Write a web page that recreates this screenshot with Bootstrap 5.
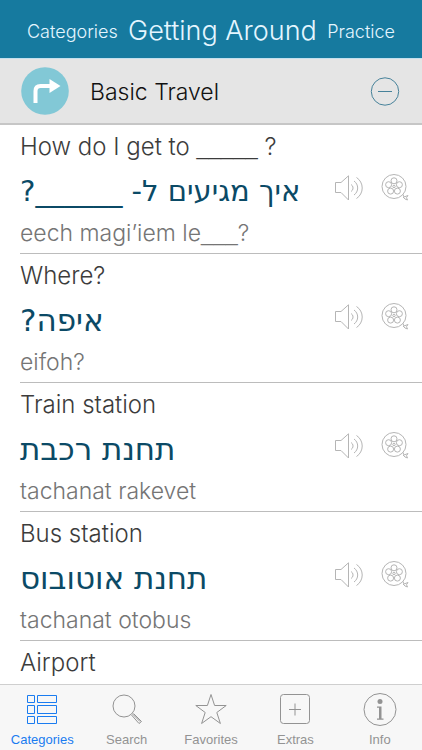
<!DOCTYPE html>
<html lang="en">
<head>
<meta charset="utf-8">
<meta name="viewport" content="width=device-width, initial-scale=1">
<title>Getting Around</title>
<link href="https://cdn.jsdelivr.net/npm/bootstrap@5.3.0/dist/css/bootstrap.min.css" rel="stylesheet">
<style>
body { font-family: Inter, "Liberation Sans", sans-serif; font-weight: 300; color: #3c3c3c; }
.topbar { background: #167a9f; height: 59px; padding: 4px 27px 0; border-bottom: 1px solid #c3e0ee; }
.topbar a, .topbar h1 { color: #e4f6ff; font-weight: 300; white-space: nowrap; }
.topbar a { font-size: 18px; }
.topbar h1 { font-size: 27px; line-height: 36px; }
.section-head { background: #e5e5e5; height: 66px; padding: 0 22px 0 21px; border-bottom: 2px solid #c6c6c6; }
.section-head h2 { font-size: 23px; font-weight: 300; color: #111; margin-left: 21px; padding-top: 3px; }
.phrases { scrollbar-width: none; }
.phrases::-webkit-scrollbar { display: none; }
.phrase { margin-left: 20px; border-bottom: 1px solid #bcbcbc; }
.english, .translit { white-space: nowrap; }
.english { font-size: 24px; line-height: 44px; }
.blank { font-family: "Liberation Sans", sans-serif; font-size: 22px; line-height: 1; }
.hebrew { font-family: "DejaVu Sans", sans-serif; font-size: 31px; font-weight: 400; line-height: 44px; color: #0b4a66; white-space: nowrap; }
.hebrew.long { font-size: 29px; }
.translit { font-size: 23px; line-height: 40px; color: #757575; }
.tools { gap: 18px; padding: 5px 13px 0 0; }
.bare { background: none; color: #b5b5b5; }
.tabs { background: #f7f7f7; height: 66px; border-top: 1px solid #cfcfcf; }
.tabs a { font-family: "Liberation Sans", sans-serif; font-weight: 400; font-size: 13px; line-height: 16px; color: #939393; padding-top: 7px; }
.tabs a.active { color: #1a7cf0; }
.tabs svg { margin-bottom: 6px; }
svg { display: block; fill: none; stroke: currentColor; }
</style>
<script src="https://cdn.jsdelivr.net/npm/bootstrap@5.3.0/dist/js/bootstrap.bundle.min.js"></script>
</head>
<body class="d-flex flex-column vh-100 overflow-hidden bg-white">

<svg class="d-none" aria-hidden="true">
  <symbol id="speaker" viewBox="0 0 30 26">
    <path d="M2.500 7.500H8L15.500 0.800V25L8 17.500H2.500Z"/>
    <path d="M18 9.500a4 4 0 0 1 0 7M21 6a8.500 8.500 0 0 1 0 14M23.500 2.500a12.500 12.500 0 0 1 0 21"/>
  </symbol>
  <symbol id="reel" viewBox="0 0 28 28">
    <circle cx="13" cy="12.500" r="12"/>
    <circle cx="13" cy="6.800" r="3"/><circle cx="18.400" cy="10.700" r="3"/><circle cx="16.400" cy="17.100" r="3"/><circle cx="9.600" cy="17.100" r="3"/><circle cx="7.600" cy="10.700" r="3"/>
    <circle cx="13" cy="12.500" r="1.200"/>
    <path d="M22 20.500l1 2.500 4-1.500-1.500 2.200 1 2.300-2.500-1-2-2"/>
  </symbol>
</svg>

<header class="topbar d-flex align-items-center justify-content-between flex-shrink-0">
  <a class="text-decoration-none" href="#categories">Categories</a>
  <h1 class="m-0">Getting Around</h1>
  <a class="text-decoration-none" href="#practice">Practice</a>
</header>

<section class="section-head d-flex align-items-center flex-shrink-0">
  <svg width="48" height="48" viewBox="0 0 48 48" aria-hidden="true">
    <circle cx="24" cy="24" r="23.800" fill="#82c8d6" stroke="none"/>
    <path d="M14.500 36V24q0-5 5-5H29" stroke="#fff" stroke-width="4"/>
    <path d="M28.500 12L39.500 19L28.500 26Z" fill="#fff" stroke="none"/>
  </svg>
  <h2 class="mb-0 me-auto">Basic Travel</h2>
  <button class="bare border-0 p-0" type="button" aria-label="Collapse Basic Travel">
    <svg width="30" height="30" viewBox="0 0 30 30"><circle cx="15" cy="15.500" r="13.700" stroke="#47829a"/><path d="M8 15.500H22" stroke="#47829a"/></svg>
  </button>
</section>

<main class="phrases flex-grow-1 overflow-auto">
  <article class="phrase">
    <div class="english">How do I get to <span class="blank">_____</span> ?</div>
    <div class="d-flex align-items-start justify-content-between">
      <div class="hebrew long" lang="he" dir="rtl">איך מגיעים ל- ______?</div>
      <div class="tools d-flex">
        <button class="bare border-0 p-0" type="button" aria-label="Listen"><svg width="30" height="26"><use href="#speaker"/></svg></button>
        <button class="bare border-0 p-0" type="button" aria-label="Watch"><svg width="28" height="28"><use href="#reel"/></svg></button>
      </div>
    </div>
    <div class="translit">eech magi’iem le<span class="blank">___</span>?</div>
  </article>
  <article class="phrase">
    <div class="english">Where?</div>
    <div class="d-flex align-items-start justify-content-between">
      <div class="hebrew" lang="he" dir="rtl">איפה?</div>
      <div class="tools d-flex">
        <button class="bare border-0 p-0" type="button" aria-label="Listen"><svg width="30" height="26"><use href="#speaker"/></svg></button>
        <button class="bare border-0 p-0" type="button" aria-label="Watch"><svg width="28" height="28"><use href="#reel"/></svg></button>
      </div>
    </div>
    <div class="translit">eifoh?</div>
  </article>
  <article class="phrase">
    <div class="english">Train station</div>
    <div class="d-flex align-items-start justify-content-between">
      <div class="hebrew" lang="he" dir="rtl">תחנת רכבת</div>
      <div class="tools d-flex">
        <button class="bare border-0 p-0" type="button" aria-label="Listen"><svg width="30" height="26"><use href="#speaker"/></svg></button>
        <button class="bare border-0 p-0" type="button" aria-label="Watch"><svg width="28" height="28"><use href="#reel"/></svg></button>
      </div>
    </div>
    <div class="translit">tachanat rakevet</div>
  </article>
  <article class="phrase">
    <div class="english">Bus station</div>
    <div class="d-flex align-items-start justify-content-between">
      <div class="hebrew" lang="he" dir="rtl">תחנת אוטובוס</div>
      <div class="tools d-flex">
        <button class="bare border-0 p-0" type="button" aria-label="Listen"><svg width="30" height="26"><use href="#speaker"/></svg></button>
        <button class="bare border-0 p-0" type="button" aria-label="Watch"><svg width="28" height="28"><use href="#reel"/></svg></button>
      </div>
    </div>
    <div class="translit">tachanat otobus</div>
  </article>
  <article class="phrase border-0">
    <div class="english">Airport</div>
  </article>
</main>

<nav class="tabs nav nav-fill flex-nowrap flex-shrink-0">
  <a class="active col d-flex flex-column align-items-center text-decoration-none" href="#categories" aria-current="page">
    <svg width="34" height="34" viewBox="0 0 34 34"><path d="M2.500 3.500h7v7h-7zM12.500 3.500h19v7h-19zM2.500 13.500h7v8h-7zM12.500 13.500h19v8h-19zM2.500 24.500h7v7h-7zM12.500 24.500h19v7h-19z"/></svg>
    Categories
  </a>
  <a class="col d-flex flex-column align-items-center text-decoration-none" href="#search">
    <svg width="34" height="34" viewBox="0 0 34 34"><circle cx="14" cy="14" r="11"/><path d="M21.500 23L29 31.500l2.500-2L23.500 21.500M22 21.500l8 8"/></svg>
    Search
  </a>
  <a class="col d-flex flex-column align-items-center text-decoration-none" href="#favorites">
    <svg width="34" height="34" viewBox="0 0 34 34"><path d="M17 2.500L20.600 13.500H32.200L22.800 20.500L26.400 31.500L17 24.700L7.600 31.500L11.200 20.500L1.800 13.500H13.400Z"/></svg>
    Favorites
  </a>
  <a class="col d-flex flex-column align-items-center text-decoration-none" href="#extras">
    <svg width="34" height="34" viewBox="0 0 34 34"><rect x="2.500" y="2.500" width="29" height="29" rx="3"/><path d="M11 17.500H23M17 11.500v12"/></svg>
    Extras
  </a>
  <a class="col d-flex flex-column align-items-center text-decoration-none" href="#info">
    <svg width="34" height="34" viewBox="0 0 34 34"><circle cx="17" cy="17.500" r="16"/><g fill="currentColor" stroke="none"><circle cx="17" cy="9.500" r="2.500"/><path d="M14 14.500h4.500v12h2v1.200H14v-1.200h2V15.700h-2z"/></g></svg>
    Info
  </a>
</nav>
</body>
</html>
